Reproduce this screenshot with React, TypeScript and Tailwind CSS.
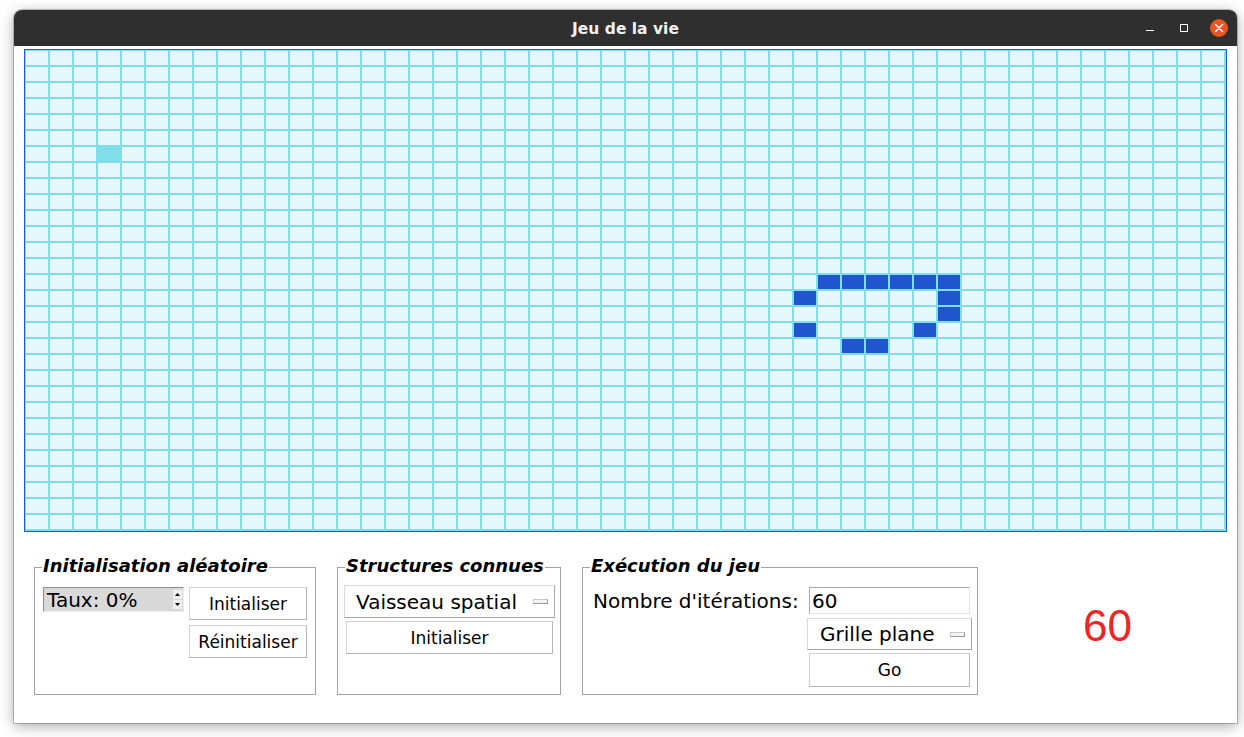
import type { ReactNode } from 'react';

const COLS = 50;
const ROWS = 30;

// cellules vivantes (ligne, colonne)
const LIVE = new Set([
  '14-33', '14-34', '14-35', '14-36', '14-37', '14-38',
  '15-32', '15-38',
  '16-38',
  '17-32', '17-37',
  '18-34', '18-35',
]);
const HOVER = '6-3';

function Frame({ title, className, children }: { title: string; className: string; children: ReactNode }) {
  return (
    <div className={`relative border border-[#a3a3a3] ${className}`}>
      <span className="absolute left-[7px] top-[-11px] bg-white px-[1px] text-[18px] leading-[18px] font-bold italic text-black whitespace-nowrap">
        {title}
      </span>
      {children}
    </div>
  );
}

function TkButton({ label, className }: { label: string; className: string }) {
  return (
    <div className={`flex items-center justify-center text-[17px] border border-[#d2d2d2] border-r-[#b4b4b4] border-b-[#b4b4b4] bg-white ${className}`}>
      {label}
    </div>
  );
}

function OptionMenu({ value, className }: { value: string; className: string }) {
  return (
    <div className={`flex items-center text-[20px] border border-[#dcdcdc] border-r-[#a6a6a6] border-b-[#a6a6a6] bg-white ${className}`}>
      <span className="flex-1 whitespace-nowrap">{value}</span>
      <span className="w-[15px] h-[5px] border border-[#c8c8c8] border-r-[#9a9a9a] border-b-[#9a9a9a] bg-[#f4f4f4]" />
    </div>
  );
}

export default function App() {
  const cells = [];
  for (let r = 0; r < ROWS; r++) {
    for (let c = 0; c < COLS; c++) {
      const key = `${r}-${c}`;
      const bg = LIVE.has(key) ? 'bg-[#1f56cd]' : key === HOVER ? 'bg-[#80deea]' : 'bg-[#e6f8fb]';
      cells.push(<div key={key} className={`h-[16px] border border-[#80deea] ${bg}`} />);
    }
  }

  return (
    <div className="w-[1244px] h-[737px] bg-white pt-[10px] pl-[14px] font-['DejaVu_Sans',sans-serif] text-black">
      <div className="w-[1223px] h-[713px] flex flex-col bg-white rounded-t-[8px] shadow-[0_0_0_1px_rgba(0,0,0,0.22),0_3px_14px_rgba(0,0,0,0.35)]">
        {/* barre de titre */}
        <div className="relative h-[36px] flex items-center justify-center bg-[#2f2f2f] rounded-t-[8px]">
          <span className="mt-[3px] font-['DejaVu_Sans',sans-serif] font-bold text-[15.5px] text-[#f2f2f2]">Jeu de la vie</span>
          <div className="absolute right-[9px] top-0 h-[36px] flex items-center">
            <span className="w-[8px] h-[1px] bg-white mt-[4px]" />
            <span className="ml-[26px] w-[8px] h-[8px] border border-white" />
            <span className="ml-[22px] w-[18px] h-[18px] rounded-full bg-[#e95420] flex items-center justify-center">
              <svg width="10" height="10" viewBox="0 0 10 10">
                <path d="M1.5 1.5 L8.5 8.5 M8.5 1.5 L1.5 8.5" stroke="white" strokeWidth="1.6" strokeLinecap="round" />
              </svg>
            </span>
          </div>
        </div>

        <div className="px-[10px] pt-[3px]">
          {/* plateau */}
          <div className="w-[1203px] pr-[1px] pb-[1px] border border-[#1e5bd6] bg-[#80deea] grid grid-cols-[repeat(50,24px)]">
            {cells}
          </div>

          {/* contrôles */}
          <div className="flex items-start mt-[35px] leading-[22px]">
            <Frame title="Initialisation aléatoire" className="ml-[10px] w-[282px] h-[128px]">
              <div className="flex pt-[19px] pl-[8px]">
                <div className="w-[141px] h-[25px] flex items-center bg-[#d9d9d9] border border-[#8c8c8c] border-r-[#efefef] border-b-[#efefef]">
                  <span className="flex-1 pl-[3px] text-[20px] whitespace-nowrap">Taux: 0%</span>
                  <div className="flex flex-col gap-[1px] mr-[1px]">
                    <span className="w-[9px] h-[9px] flex items-center justify-center bg-[#f0f0f0]">
                      <svg width="5" height="3" viewBox="0 0 5 3"><path d="M2.5 0 L5 3 L0 3 Z" fill="black" /></svg>
                    </span>
                    <span className="w-[9px] h-[9px] flex items-center justify-center bg-[#f0f0f0]">
                      <svg width="5" height="3" viewBox="0 0 5 3"><path d="M0 0 L5 0 L2.5 3 Z" fill="black" /></svg>
                    </span>
                  </div>
                </div>
                <div className="ml-[5px] flex flex-col gap-[5px]">
                  <TkButton label="Initialiser" className="w-[118px] h-[33px]" />
                  <TkButton label="Réinitialiser" className="w-[118px] h-[33px]" />
                </div>
              </div>
            </Frame>

            <Frame title="Structures connues" className="ml-[21px] w-[224px] h-[128px]">
              <div className="flex flex-col pt-[17px] pl-[6px]">
                <OptionMenu value="Vaisseau spatial" className="w-[211px] h-[33px] pl-[11px] pr-[6px]" />
                <TkButton label="Initialiser" className="ml-[2px] mt-[3px] w-[207px] h-[33px]" />
              </div>
            </Frame>

            <Frame title="Exécution du jeu" className="ml-[21px] w-[396px] h-[128px]">
              <div className="flex pt-[19px] pl-[10px] pr-[5px]">
                <div className="h-[27px] flex items-center text-[20px] whitespace-nowrap">Nombre d'itérations:</div>
                <div className="ml-auto flex flex-col">
                  <div className="mx-[2px] w-[161px] h-[27px] flex items-center pl-[2px] text-[20px] bg-white border border-[#a8a8a8] border-r-[#e4e4e4] border-b-[#e4e4e4]">
                    60
                  </div>
                  <OptionMenu value="Grille plane" className="mt-[4px] w-[165px] h-[32px] pl-[12px] pr-[6px]" />
                  <TkButton label="Go" className="mx-[2px] mt-[3px] w-[161px] h-[34px]" />
                </div>
              </div>
            </Frame>

            <div className="flex-1 pl-[10px] pt-[34px] text-center font-['Liberation_Sans',sans-serif] text-[44px] leading-[50px] text-[#ef2424]">
              60
            </div>
          </div>
        </div>
      </div>
    </div>
  );
}
